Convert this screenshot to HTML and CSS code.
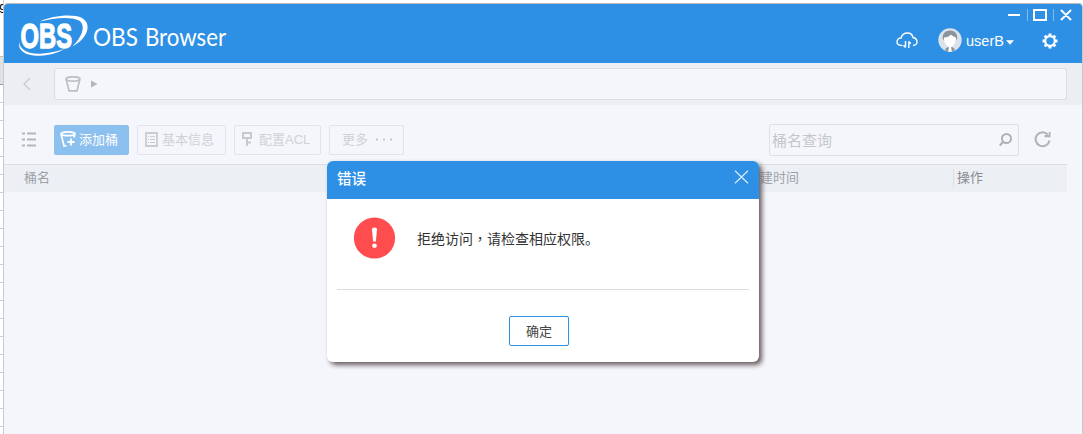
FILE: index.html
```html
<!DOCTYPE html>
<html lang="zh-CN">
<head>
<meta charset="utf-8">
<title>OBS Browser</title>
<link rel="stylesheet" href="styles.css">
</head>
<body>
<div class="desktop">
  <aside class="sheet">
    <div class="sheet-text">9</div>
    <div class="sheet-head"></div>
    <div class="sheet-rows"></div>
  </aside>
  <main class="window">
    <header class="titlebar">
      <svg class="logo" width="224" height="59" viewBox="4 4 224 59">
        <g fill="#fff" stroke="#fff">
          <text class="logo-mark" x="20.500" y="48" textLength="51.500" lengthAdjust="spacingAndGlyphs" stroke-width="1.300">OBS</text>
          <path stroke="none" d="M40 21.500C52 15.500 73 13.500 82 18C92 23.500 88.500 38 72.500 46.500C81 38 87 26 79 20.500C70 16 53 18 40 21.500Z"/>
          <path stroke="none" d="M19.500 42C19 50 30 55 43 53.500C51 52.700 58 51 64.500 49C57 53 50 55.300 40 55.700C27 56.200 17 51 19.500 42Z"/>
        </g>
        <g class="logo-name">
          <text x="93" y="45.500" textLength="45" lengthAdjust="spacingAndGlyphs">OBS</text>
          <text x="145" y="45.500" textLength="81" lengthAdjust="spacingAndGlyphs">Browser</text>
        </g>
      </svg>
      <div class="title-tools">
        <div class="window-controls">
          <svg width="66" height="16" viewBox="1006 7 66 16" fill="none" stroke="#fff">
            <path d="M1008 15h12M1034 10h12v10h-12zM1061 10l10 10M1071 10l-10 10" stroke-width="2"/>
            <path d="M1027.500 9v12M1053.500 9v12" stroke="#82bdf0"/>
          </svg>
        </div>
        <div class="user-tools">
          <svg class="cloud" width="22" height="18" viewBox="0 0 22 18" fill="none" stroke="#fff" stroke-width="1.400">
            <path d="M6.500 13.500H5.500C2.500 13.500 1 12 1 10C1 7.500 3 6 5 6C6 2.500 8.500 1 11.500 1C14.500 1 16.500 3 17 5.500C20 6 21 8 21 10C21 12 19 13.500 17 13.500"/>
            <path d="M9.500 9v6.500M7.500 13.200l2 2.300M12.800 16V9.500M14.800 11.800l-2-2.300"/>
          </svg>
          <svg class="avatar" width="24" height="24" viewBox="0 0 24 24">
            <defs><clipPath id="disc"><circle cx="12" cy="12" r="11.700"/></clipPath></defs>
            <g clip-path="url(#disc)">
              <path fill="#dbe2ea" d="M0 0h24v24H0z"/>
              <path fill="#8b939c" d="M5 11C4 6 7 2.500 12 2.500S20 6 19 11L17.500 13H6.500zM7 21l3-2h4l3 2-2 3H9z"/>
              <path fill="#fff" d="M6 9.500C9.500 9.500 12 7.500 13 6.500C14.500 8.500 18 9.500 18 9.500C18.500 14 15.500 18 12 20C8.500 18 5.500 14 6 9.500zM11 19h2l1 5h-4z"/>
            </g>
          </svg>
          <span class="user-name">userB</span>
          <svg class="caret" width="8" height="5"><path fill="#fff" d="M0 .3h8L4 4.700z"/></svg>
          <svg class="gear" width="16" height="16" viewBox="-8 -8 16 16">
            <circle r="4.800" fill="none" stroke="#fff" stroke-width="2.200"/>
            <path stroke="#fff" stroke-width="3" d="M0-7.500v2.500M0 5v2.500M-7.500 0h2.500M5 0h2.500M-5.300-5.300l1.300 1.300M4 4l1.300 1.300M5.300-5.300l-1.300 1.300M-4 4l-1.300 1.300"/>
          </svg>
        </div>
      </div>
    </header>
    <nav class="pathbar">
      <svg class="back" width="8" height="14" fill="none" stroke="#c7c8cc" stroke-width="1.200"><path d="M7 1L1 7l6 6"/></svg>
      <div class="path-box">
        <svg width="16" height="16" fill="none" stroke="#bebfc3" stroke-width="1.700"><ellipse cx="8" cy="3" rx="7" ry="2.200"/><path d="M1.200 3.500L4 14.800h8l2.800-11.300"/></svg>
        <svg width="7" height="8"><path fill="#b5b6ba" d="M0 .5v7L6.500 4z"/></svg>
      </div>
    </nav>
    <section class="toolbar">
      <svg class="list-icon" width="14" height="15" stroke="#b4b5b9" stroke-width="2"><path d="M0 1.500h3M5 1.500h9M0 7.500h3M5 7.500h9M0 13.500h3M5 13.500h9"/></svg>
      <button class="btn primary">
        <svg width="16" height="16" fill="none" stroke="#fff" stroke-width="1.800"><ellipse cx="8" cy="2.800" rx="7" ry="1.900"/><path d="M1.200 3.500L4 14.800h2.500M14.800 3.500l-.8 3M7.500 11h7M11 7.500v7"/></svg>
        <span>添加桶</span>
      </button>
      <button class="btn info">
        <svg width="13" height="15" fill="none" stroke="#cbccd0"><path stroke-width="1.800" d="M1 1h11v13H1z"/><path d="M3 4.500h1M5 4.500h5M3 7.500h1M5 7.500h5M3 10.500h1M5 10.500h5"/></svg>
        <span>基本信息</span>
      </button>
      <button class="btn acl">
        <svg width="10" height="14" fill="none" stroke="#c8c9cd" stroke-width="2"><path d="M1 1h8v5H1zM5 6v8M5 10.500h4"/></svg>
        <span>配置ACL</span>
      </button>
      <button class="btn more">
        <span>更多</span>
        <svg width="18" height="3" fill="#c6c7cb"><path d="M1 .5h2v2H1zM8 .5h2v2H8zM15 .5h2v2h-2z"/></svg>
      </button>
      <div class="search">
        <span>桶名查询</span>
        <svg width="13" height="14" fill="none" stroke="#aeb0b4" stroke-width="2"><circle cx="7.500" cy="5.500" r="4.500"/><path d="M4.300 8.800L.8 12.500"/></svg>
      </div>
      <svg class="refresh" width="17" height="17" fill="none" stroke="#b0b2b6" stroke-width="2"><path d="M13.800 3.500A7 7 0 1 0 15.500 9.500"/><path fill="#b0b2b6" stroke="none" d="M10.500 6.200H16.500V1H14.800V4H10.500z"/></svg>
    </section>
    <div class="table-head">
      <span class="col-name">桶名</span>
      <span class="col-time">创建时间</span>
      <span class="col-action">操作</span>
    </div>
  </main>
  <section class="dialog" role="dialog">
    <header class="dialog-title">
      <span>错误</span>
      <svg width="15" height="14" fill="none" stroke="#d9ebfb" stroke-width="1.200"><path d="M1 .8l13 12.400M14 .8L1 13.200"/></svg>
    </header>
    <div class="dialog-message">
      <svg width="42" height="42"><circle cx="20.500" cy="21" r="20.600" fill="#ff4d4f"/><path fill="#fff" d="M18 12q0-1.500 2.500-1.500T23 12L21.900 24.500h-2.800z"/><circle cx="20.500" cy="28.700" r="2.300" fill="#fff"/></svg>
      <span>拒绝访问<span class="comma" lang="zh-TW">，</span>请检查相应权限。</span>
    </div>
    <footer class="dialog-actions"><button class="confirm">确定</button></footer>
  </section>
</div>
</body>
</html>
```
FILE: styles.css
```css
* { box-sizing: border-box; }
body { margin: 0; background: #fff; font-family: "Liberation Sans", "Noto Sans CJK SC", sans-serif; font-size: 13px; }
svg { display: block; flex: none; }
button { font: inherit; margin: 0; }

.desktop { position: relative; display: flex; width: 1083px; height: 434px; overflow: hidden; }
.sheet { width: 4px; flex: none; border-right: 1px solid #c9cacf; overflow: hidden; }
.sheet-text { height: 56px; font: 13px/18px "Liberation Sans", sans-serif; margin-left: -1px; }
.sheet-head { height: 29px; background: #e1e1e1; border-top: 1px solid #c2c2c2; border-bottom: 1px solid #999; }
.sheet-rows { height: 349px; background: repeating-linear-gradient(to bottom, transparent 0 17px, #cecece 17px 18px); }

.window { width: 1079px; height: 431px; margin-top: 3px; background: #f4f6fb; border-top: 1px solid #b9b9b9; border-right: 1px solid #c5c7cc; border-radius: 4px 4px 0 0; overflow: hidden; }
.titlebar { display: flex; justify-content: space-between; height: 59px; background: #2d90e5; }
.logo { overflow: visible; }
.logo-mark { font: bold 35px "Liberation Sans", sans-serif; }
.logo-name { font: 24.5px Lato, sans-serif; fill: #fff; }
.title-tools { width: 190px; padding-top: 3px; }
.window-controls { display: flex; justify-content: flex-end; padding-right: 10px; }
.user-tools { display: flex; align-items: center; height: 30px; padding-top: 5px; }
.cloud { margin: 0 0 0 4px; }
.avatar { margin: -2px 0 0 20px; }
.user-name { margin: 0 0 0 4px; color: #fff; font-size: 14.5px; width: 38px; white-space: nowrap; }
.caret { margin: 4px 0 0 2px; }
.gear { margin: 0 0 0 28px; }

.pathbar { display: flex; align-items: center; height: 42px; padding: 0 15px 0 19px; background: #edeef3; }
.back { margin-right: 23px; }
.path-box { flex: 1; display: flex; align-items: center; gap: 10px; height: 32px; padding-left: 10px; border: 1px solid #dadbe0; border-radius: 2px; background: #f4f6fb; }

.toolbar { display: flex; align-items: center; height: 59px; padding: 10px 0 0 18px; }
.list-icon { margin-right: 18px; }
.btn { display: flex; align-items: center; height: 30px; margin-right: 8px; padding: 0 0 1px 7px; border: 1px solid #e2e3e8; border-radius: 2px; background: transparent; color: #d0d1d5; white-space: nowrap; }
.btn span { margin-top: -2px; }
.primary { width: 75px; padding-left: 5px; gap: 3px; border-color: #8cc0ee; background: #8cc0ee; color: #fff; }
.info { width: 89px; gap: 4px; }
.acl { width: 87px; gap: 7px; }
.more { width: 75px; padding-left: 12px; gap: 7px; margin-right: 365px; }
.search { display: flex; align-items: center; justify-content: space-between; width: 250px; height: 32px; padding: 0 6px 0 2px; border: 1px solid #dedfe4; border-radius: 2px; color: #c5c6ca; font-size: 15px; }
.refresh { margin-left: 15px; }

.table-head { display: flex; align-items: center; width: 1063px; height: 28px; padding: 0 0 2px 20px; background: #ecf0f5; border-top: 1px solid #dcdee3; color: #a0a1a5; line-height: 18px; }
.col-name { width: 723px; }
.col-time { width: 206px; }
.col-action { border-left: 1px solid #dcdee3; padding-left: 3px; color: #8b8c90; }

.dialog { position: absolute; left: 327px; top: 161px; width: 432px; height: 201px; border-radius: 6px; background: #fff; box-shadow: 3px 3px 5px #675b5d; overflow: hidden; }
.dialog-title { display: flex; align-items: center; justify-content: space-between; height: 38px; padding: 0 10px 6px; background: #2d90e5; color: #fff; font-size: 14.5px; font-weight: 500; }
.dialog-message { display: flex; align-items: center; gap: 21px; height: 91px; margin: 0 10px; padding: 0 0 12px 17px; border-bottom: 1px solid #dcdcdc; color: #333; font-size: 14px; }
.comma { font-family: "Noto Sans CJK TC", sans-serif; }
.dialog-actions { display: flex; justify-content: center; padding: 26px 8px 0 0; }
.confirm { width: 60px; height: 30px; padding: 0 0 2px; border: 1px solid #2d90e5; border-radius: 2px; background: #fff; color: #444; }
```
